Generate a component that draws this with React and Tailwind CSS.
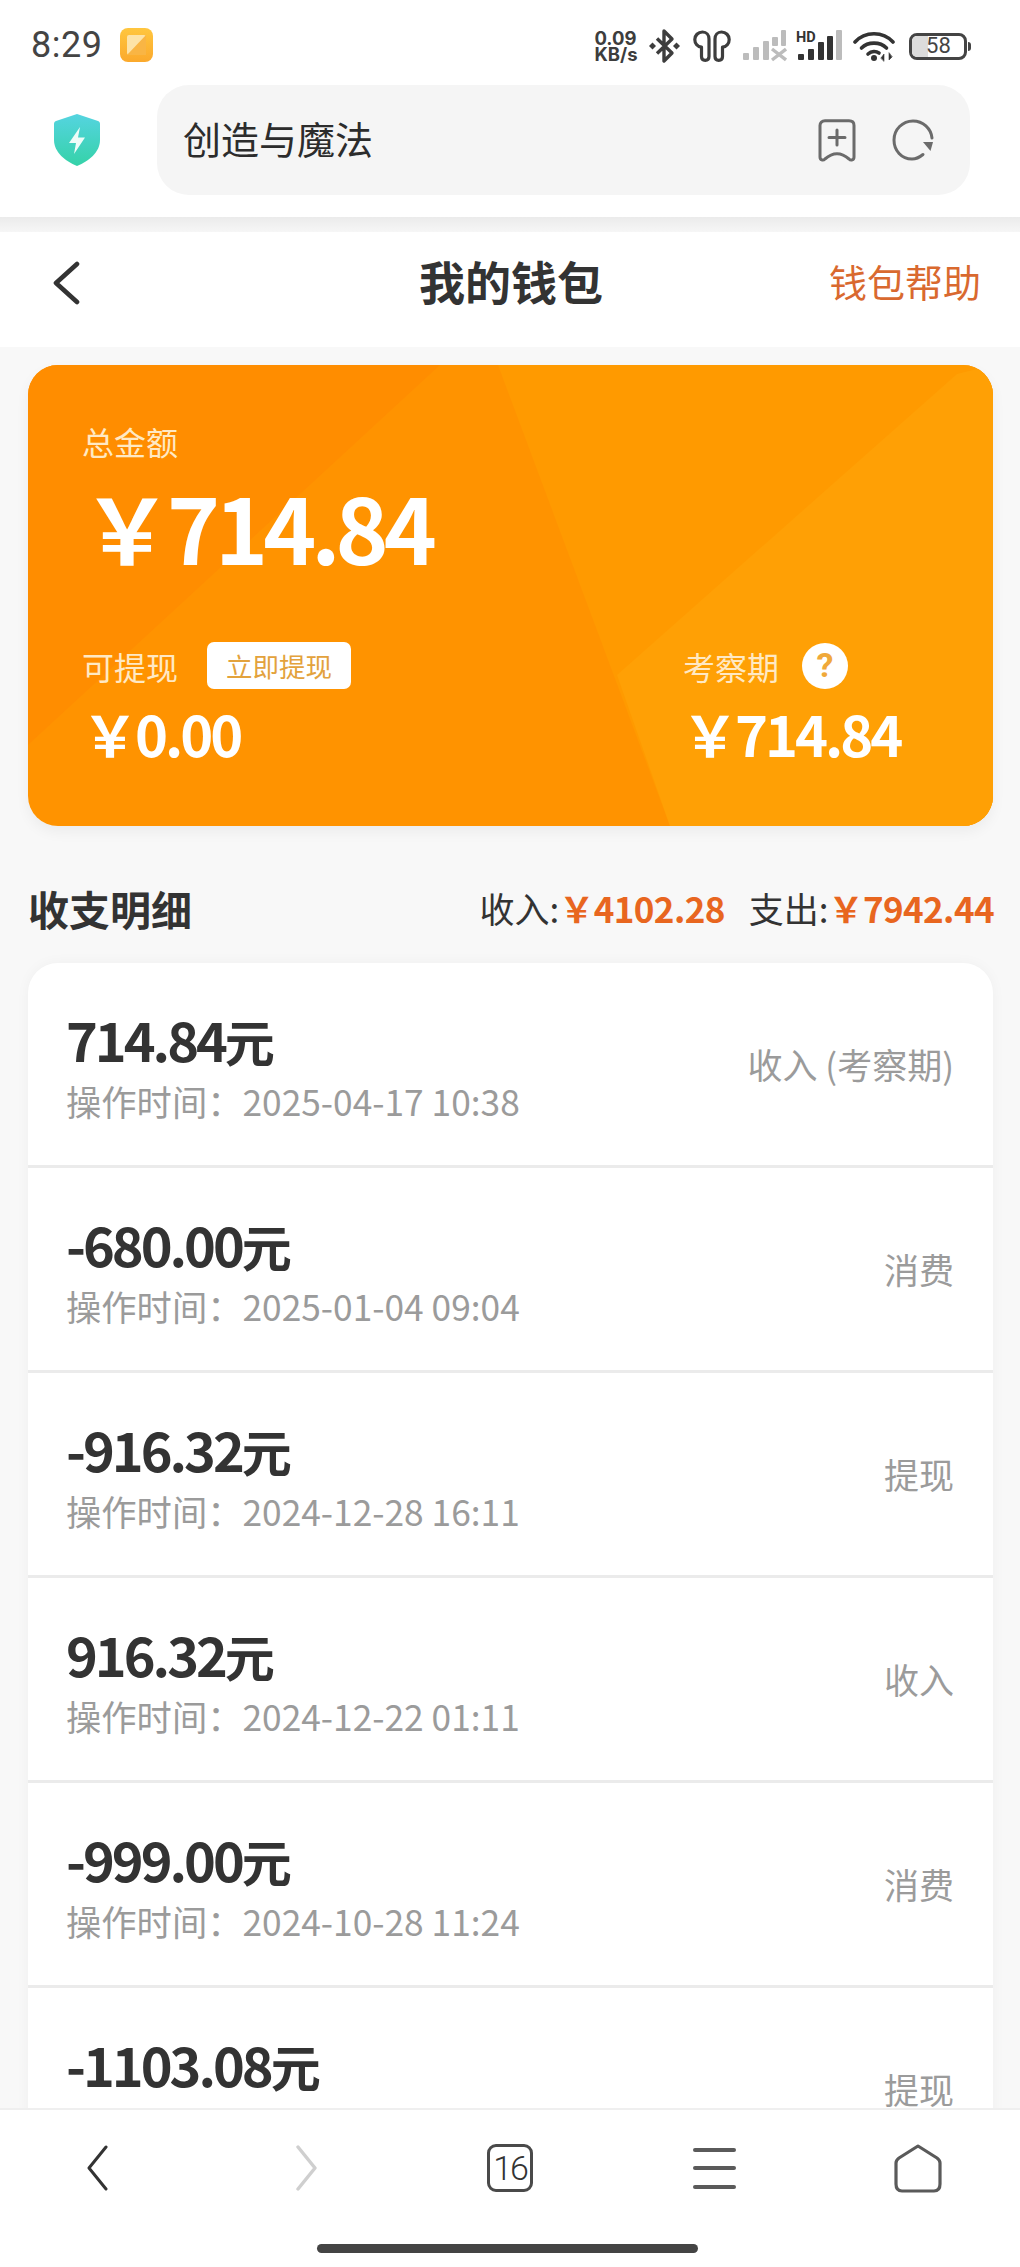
import React from "react";

const YEN = "\uFFE5";

const rows = [
  ["714.84", "2025-04-17 10:38", "收入 (考察期)"],
  ["-680.00", "2025-01-04 09:04", "消费"],
  ["-916.32", "2024-12-28 16:11", "提现"],
  ["916.32", "2024-12-22 01:11", "收入"],
  ["-999.00", "2024-10-28 11:24", "消费"],
  ["-1103.08", null, "提现"],
];

function AppIcon() {
  return (
    <svg width="33" height="34" viewBox="0 0 33 34" className="ml-[18px]">
      <defs>
        <linearGradient id="ai" x1="0" y1="0" x2="0" y2="1">
          <stop offset="0" stopColor="#ffc63f" />
          <stop offset="1" stopColor="#fba92c" />
        </linearGradient>
      </defs>
      <rect width="33" height="34" rx="8" fill="url(#ai)" />
      <rect x="7" y="7" width="19" height="20" rx="2" fill="#fde3a8" />
      <path d="M26 7V27H7Z" fill="#f9b544" />
    </svg>
  );
}

function Bluetooth() {
  return (
    <svg width="33" height="36" viewBox="0 0 33 36" fill="none" stroke="#3d3d3d" strokeWidth="3.4" strokeLinejoin="round">
      <path d="M9 10.5L24 25L16 33V3L24 11L9 25.5" />
      <path d="M1 18L4.5 14.5L8 18L4.5 21.5Z" fill="#3d3d3d" strokeWidth="0" />
      <path d="M25 18L28.5 14.5L32 18L28.5 21.5Z" fill="#3d3d3d" strokeWidth="0" />
    </svg>
  );
}

function Buds() {
  return (
    <svg width="38" height="32" viewBox="0 0 38 32" fill="none" stroke="#3d3d3d" strokeWidth="3.2" strokeLinejoin="round">
      <path d="M9.5 2C5 2 1.8 5.5 1.8 9.5C1.8 13.5 4.5 16.5 8.5 17.2V26.5C8.5 29 10 30.3 12.2 30.3C14.5 30.3 16 29 16 26.5V9C16 5 13.5 2 9.5 2Z" />
      <path d="M28.5 2C33 2 36.2 5.5 36.2 9.5C36.2 13.5 33.5 16.5 29.5 17.2V26.5C29.5 29 28 30.3 25.8 30.3C23.5 30.3 22 29 22 26.5V9C22 5 24.5 2 28.5 2Z" />
    </svg>
  );
}

function SignalOff() {
  return (
    <svg width="44" height="32" viewBox="0 0 44 32" fill="#bcbcbc">
      <rect x="0" y="23" width="6" height="7" rx="1" />
      <rect x="10" y="17" width="6" height="13" rx="1" />
      <rect x="20" y="11" width="6" height="19" rx="1" />
      <rect x="29" y="7" width="6" height="9" rx="1" />
      <rect x="38" y="0" width="5" height="16" rx="1" />
      <path d="M29 19L43 30M43 19L29 30" stroke="#bcbcbc" strokeWidth="3.4" fill="none" />
    </svg>
  );
}

function SignalHd() {
  return (
    <svg width="46" height="32" viewBox="0 0 46 32">
      <text x="0" y="11.5" fontFamily="Roboto, sans-serif" fontWeight="700" fontSize="14.5" fill="#333">HD</text>
      <rect x="2" y="24" width="6" height="6" rx="1" fill="#333" />
      <rect x="12" y="19" width="6" height="11" rx="1" fill="#333" />
      <rect x="22" y="12" width="6" height="18" rx="1" fill="#333" />
      <rect x="31" y="6" width="6" height="24" rx="1" fill="#333" />
      <rect x="40" y="0" width="6" height="30" rx="1" fill="#bcbcbc" />
    </svg>
  );
}

function Wifi() {
  return (
    <svg width="43" height="32" viewBox="0 0 43 32" fill="none" stroke="#333" strokeWidth="3.6" strokeLinecap="round">
      <path d="M2 12C12 1 30 1 40 12" />
      <path d="M8.5 18C15 11.5 27 11.5 33.5 18" />
      <path d="M15 24C18.5 21 23 21 26 23" />
      <circle cx="21" cy="28" r="3" fill="#333" stroke="none" />
      <path d="M31 31V24L28 28Z" fill="#333" strokeWidth="0.6" />
      <path d="M36 23V30L39 27Z" fill="#333" strokeWidth="0.6" />
    </svg>
  );
}

function Bookmark() {
  return (
    <svg width="38" height="43" viewBox="0 0 38 43" fill="none" stroke="#6b6b6b" strokeWidth="3" strokeLinejoin="round" strokeLinecap="round">
      <path d="M7 1.8H31C34 1.8 36 3.6 36 6.5V38C36 41 33 42 31 40C27 36.5 23 34.8 19 34.8C15 34.8 11 36.5 7 40C5 42 2 41 2 38V6.5C2 3.6 4 1.8 7 1.8Z" />
      <path d="M19 11V26M11 18.5H27" />
    </svg>
  );
}

function Reload() {
  return (
    <svg width="42" height="42" viewBox="0 0 42 42" fill="none">
      <path d="M31 35.5C27 38.8 23.5 40 20 40C9.5 40 2 31.5 2 21C2 10.5 10.5 2 21 2C31 2 39 9.5 40 19" stroke="#6b6b6b" strokeWidth="3" strokeLinecap="round" />
      <path d="M31 23H41L38.5 32Z" fill="#6b6b6b" />
    </svg>
  );
}

function Shield() {
  return (
    <svg width="46" height="52" viewBox="0 0 46 52">
      <defs>
        <linearGradient id="sh" x1="0" y1="0" x2="0" y2="1">
          <stop offset="0" stopColor="#55d4e0" />
          <stop offset="1" stopColor="#35d2a8" />
        </linearGradient>
      </defs>
      <path d="M23 0L44 7C45.5 7.5 46 8.5 46 10V26C46 38 35 47 23 52C11 47 0 38 0 26V10C0 8.5 .5 7.5 2 7Z" fill="url(#sh)" />
      <path d="M26 13L15 29H22L20 40L31 23.5H24Z" fill="#eefcf8" />
    </svg>
  );
}

function CardFacets() {
  return (
    <svg className="absolute inset-0 h-full w-full" viewBox="0 0 965 461" preserveAspectRatio="none">
      <rect width="965" height="461" fill="#ff9300" />
      <path d="M0 0H412L0 380Z" fill="#ff8d00" />
      <path d="M470 0H965V461H642Z" fill="#ff9a00" />
      <path d="M589 310L929 9L965 0V461H642Z" fill="#ffa005" />
    </svg>
  );
}

function Row({ amount, time, label }) {
  return (
    <div className="flex h-[205px] shrink-0 border-b-[3px] border-[#ebebeb] pl-[38px] pr-[39px]">
      <div className="flex flex-col pt-[50px]">
        <div className="flex h-[52px] items-baseline font-bold leading-[52px] text-[#333]">
          <span className="text-[54px] tracking-[-3px]">{amount}</span>
          <span className="text-[50px]">元</span>
        </div>
        {time && (
          <div className="mt-[17px] h-[38px] text-[35.3px] leading-[38px] text-[#9b9b9b]">
            操作时间：{time}
          </div>
        )}
      </div>
      <div className="ml-auto self-center text-[35px] leading-[44px] text-[#9b9b9b]">{label}</div>
    </div>
  );
}

export default function App() {
  return (
    <div className="flex h-[2267px] w-[1020px] flex-col overflow-hidden bg-white font-['Noto_Sans_CJK_SC','Noto_Sans',sans-serif]">
      {/* status bar */}
      <div className="flex h-[85px] shrink-0 items-start pt-[28px]">
        <div className="flex items-center pl-[31px]">
          <span className="font-['Roboto',sans-serif] text-[36px] leading-[34px] tracking-[0.5px] text-[#444]">8:29</span>
          <AppIcon />
        </div>
        <div className="ml-[441px] flex items-center">
          <div className="mr-[10px] w-[44px] font-['Inter',sans-serif] text-[18.5px] font-bold leading-[16px] text-[#3d3d3d]">
            0.09<br />KB/s
          </div>
          <Bluetooth />
          <div className="ml-[12px]"><Buds /></div>
          <div className="ml-[12px]"><SignalOff /></div>
          <div className="ml-[9px]"><SignalHd /></div>
          <div className="ml-[11px]"><Wifi /></div>
          <div className="relative ml-[13px] flex h-[27px] w-[58px] items-center justify-center overflow-hidden rounded-[8px] border-[3px] border-[#444]">
            <div className="absolute inset-y-0 left-0 w-[16px] bg-[#dcdcdc]" />
            <span className="relative font-['Roboto',sans-serif] text-[22px] leading-[22px] text-[#444]">58</span>
          </div>
          <div className="ml-[1px] h-[9px] w-[3px] rounded-r bg-[#444]" />
        </div>
      </div>

      {/* browser toolbar */}
      <div className="flex h-[132px] shrink-0 items-start">
        <div className="ml-[54px] mt-[29px]"><Shield /></div>
        <div className="ml-[57px] flex h-[110px] w-[813px] items-center rounded-[32px] bg-[#f5f5f5] pl-[26px] pr-[36px]">
          <span className="pb-[4px] text-[38px] leading-[44px] text-[#2c2c2c]">创造与魔法</span>
          <div className="ml-auto flex items-center gap-[36px]">
            <Bookmark />
            <Reload />
          </div>
        </div>
      </div>
      <div className="h-[15px] shrink-0 bg-gradient-to-b from-[#ebebeb] to-[#f6f6f6]" />

      {/* page header */}
      <div className="flex h-[115px] shrink-0 items-center bg-white pb-[18px]">
        <svg width="30" height="44" viewBox="0 0 30 44" fill="none" className="ml-[51px] mt-[5px]" stroke="#333" strokeWidth="4.6" strokeLinecap="round" strokeLinejoin="round">
          <path d="M26 3L5 22L26 41" />
        </svg>
        <div className="mb-[1px] ml-[338px] text-[46px] font-bold leading-[54px] text-[#333]">我的钱包</div>
        <div className="ml-auto mr-[39px] text-[38px] leading-[46px] text-[#d9692f]">钱包帮助</div>
      </div>

      {/* main */}
      <div className="min-h-0 flex-1 overflow-hidden bg-[#f8f8f8] px-[28px] pt-[18px]">
        <div className="relative h-[461px] w-[965px] overflow-hidden rounded-[30px] shadow-[0_6px_14px_rgba(0,0,0,0.05)]">
          <CardFacets />
          <div className="relative pl-[54px] pt-[60px] text-white">
            <div className="text-[32px] leading-[32px] text-[#ffe9c4]">总金额</div>
            <div className="mt-[21px] h-[96px] text-[90px] font-bold leading-[96px] tracking-[-5px]">{YEN}714.84</div>
            <div className="mt-[68px] flex h-[47px] items-center">
              <span className="text-[32px] leading-[40px] text-[#ffe9c4]">可提现</span>
              <div className="ml-[29px] flex h-[47px] w-[144px] items-center justify-center rounded-[7px] bg-white text-[26.5px] text-[#e3a23c]">立即提现</div>
              <span className="ml-[332px] text-[32px] leading-[40px] text-[#ffe9c4]">考察期</span>
              <div className="ml-[23px] flex h-[46px] w-[46px] items-center justify-center rounded-full bg-white font-['Roboto',sans-serif] text-[34px] font-bold text-[#f0a93a]">?</div>
            </div>
            <div className="mt-[14px] flex h-[60px] text-[56px] font-bold leading-[60px] tracking-[-3px]">
              <span className="w-[600px]">{YEN}0.00</span>
              <span>{YEN}714.84</span>
            </div>
          </div>
        </div>

        {/* summary heading */}
        <div className="flex h-[137px] w-[966px] items-center pt-[27px]">
          <div className="text-[41px] font-bold leading-[48px] text-[#333]">收支明细</div>
          <div className="ml-auto flex items-center text-[35px] leading-[44px] text-[#333]">
            <span>收入:</span>
            <span className="font-bold tracking-[-0.6px] text-[#e8661f]">{YEN}4102.28</span>
            <span className="ml-[24px]">支出:</span>
            <span className="font-bold tracking-[-0.6px] text-[#e8661f]">{YEN}7942.44</span>
          </div>
        </div>

        {/* records */}
        <div className="flex w-[965px] flex-col overflow-hidden rounded-t-[30px] bg-white shadow-[0_0_14px_rgba(0,0,0,0.04)]">
          {rows.map((r) => (
            <Row key={r[0]} amount={r[0]} time={r[1]} label={r[2]} />
          ))}
        </div>
      </div>

      {/* bottom bar */}
      <div className="h-[159px] shrink-0 border-t-2 border-[#efefef] bg-white">
        <div className="grid h-[116px] grid-cols-5 place-items-center">
          <svg width="24" height="46" viewBox="0 0 24 46" fill="none" stroke="#333" strokeWidth="3" strokeLinecap="round" strokeLinejoin="round" className="mr-[10px]">
            <path d="M21 2L4 23L21 44" />
          </svg>
          <svg width="24" height="46" viewBox="0 0 24 46" fill="none" stroke="#cfcfcf" strokeWidth="3.4" strokeLinecap="round" strokeLinejoin="round" className="ml-[2px]">
            <path d="M3 2L20 23L3 44" />
          </svg>
          <div className="flex h-[48px] w-[46px] items-center justify-center rounded-[9px] border-[3px] border-[#4a4a4a] font-['Roboto',sans-serif] text-[34px] font-light leading-[40px] tracking-[-2px] text-[#333]">16</div>
          <div className="flex w-[43px] flex-col gap-[14.5px]">
            <div className="h-[4px] rounded bg-[#5a5a5a]" />
            <div className="h-[4px] rounded bg-[#5a5a5a]" />
            <div className="h-[4px] rounded bg-[#5a5a5a]" />
          </div>
          <svg width="48" height="49" viewBox="0 0 48 49" fill="none" stroke="#5a5a5a" strokeWidth="3.2" strokeLinejoin="round">
            <path d="M24 2L43 14C45 15.5 46 17 46 19V40C46 44.5 44 47 40 47H8C4 47 2 44.5 2 40V19C2 17 3 15.5 5 14Z" />
          </svg>
        </div>
        <div className="ml-[317px] mt-[18px] h-[9px] w-[381px] rounded-full bg-[#444]" />
      </div>
    </div>
  );
}
